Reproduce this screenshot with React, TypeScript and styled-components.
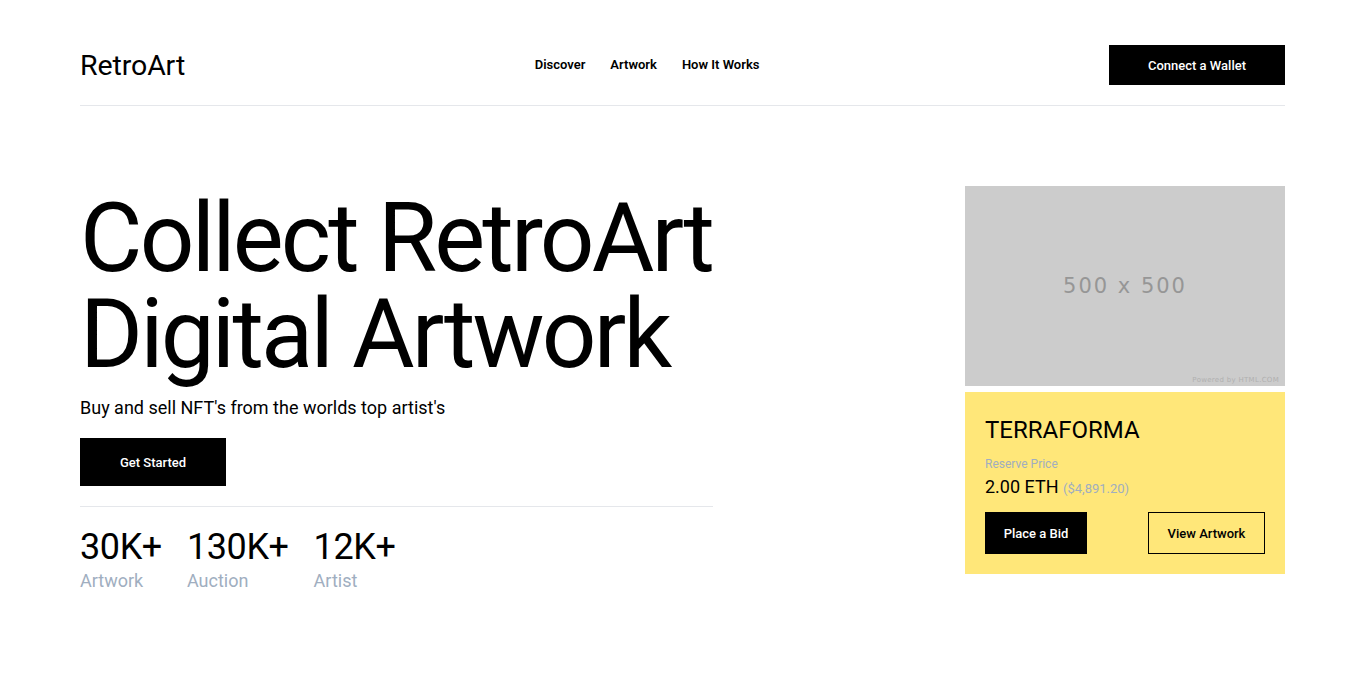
import React from "react";
import styled, { createGlobalStyle } from "styled-components";

const Global = createGlobalStyle`
  * { box-sizing: border-box; }
  body { margin: 0; background: #fff; font-family: Roboto, "Noto Sans", sans-serif; color: #000; }
`;

const Page = styled.div`
  padding: 0 80px;
`;

const Header = styled.header`
  display: flex;
  justify-content: space-between;
  align-items: center;
  padding: 45px 0 20px;
  border-bottom: 1px solid #e5e7eb;
`;

const Logo = styled.div`
  font-size: 28.5px;
  font-weight: 400;
  letter-spacing: -0.1px;
`;

const Nav = styled.nav`
  display: flex;
  gap: 25px;
  margin-top: -1px;
`;

const NavLink = styled.a`
  font-size: 13px;
  font-weight: 600;
  color: #000;
  text-decoration: none;
`;

const Button = styled.button<{ $outline?: boolean }>`
  font-family: inherit;
  font-size: 13px;
  font-weight: 500;
  background: ${(p) => (p.$outline ? "transparent" : "#000")};
  color: ${(p) => (p.$outline ? "#000" : "#fff")};
  border: 1px solid #000;
  padding: 0;
  cursor: pointer;
`;

const WalletButton = styled(Button)`
  width: 176px;
  height: 40px;
`;

const Hero = styled.section`
  display: flex;
  justify-content: space-between;
  align-items: flex-start;
  padding-top: 80px;
`;

const Left = styled.div`
  width: 633px;
  padding-top: 4px;
`;

const Title = styled.h1`
  margin: 0;
  font-size: 96px;
  font-weight: 400;
  line-height: 96px;
  letter-spacing: -2.8px;
  white-space: nowrap;
`;

const Subtitle = styled.p`
  margin: 12px 0 0;
  font-size: 18px;
  line-height: 28px;
`;

const StartButton = styled(Button)`
  width: 146px;
  height: 48px;
  margin-top: 16px;
`;

const Divider = styled.hr`
  margin: 20px 0 0;
  border: 0;
  border-top: 1px solid #e5e7eb;
`;

const Stats = styled.div`
  display: flex;
  gap: 25px;
  margin-top: 20px;
`;

const Stat = styled.div`
  display: flex;
  flex-direction: column;
`;

const StatValue = styled.div`
  font-size: 36px;
  line-height: 40px;
  letter-spacing: -0.4px;
`;

const StatLabel = styled.div`
  font-size: 18px;
  line-height: 28px;
  color: #a0aec0;
`;

const Card = styled.div`
  width: 320px;
  display: flex;
  flex-direction: column;
  gap: 6px;
`;

const Placeholder = styled.div`
  position: relative;
  height: 200px;
  background: #cccccc;
  display: flex;
  align-items: center;
  justify-content: center;
  font-family: "DejaVu Sans", Verdana, sans-serif;
  font-size: 21px;
  letter-spacing: 2px;
  color: #969696;
`;

const Powered = styled.span`
  position: absolute;
  right: 6px;
  bottom: 2px;
  font-size: 7px;
  letter-spacing: 0.3px;
  color: #b0b0b0;
`;

const Info = styled.div`
  background: #ffe779;
  padding: 22px 20px 20px;
`;

const CardTitle = styled.h2`
  margin: 0;
  font-size: 24px;
  font-weight: 400;
  line-height: 32px;
`;

const ReserveLabel = styled.div`
  margin-top: 10px;
  font-size: 12px;
  line-height: 16px;
  color: #a0aec0;
`;

const Price = styled.div`
  margin-top: 1px;
  font-size: 18px;
  line-height: 28px;
`;

const Usd = styled.span`
  font-size: 13px;
  color: #a0aec0;
`;

const Actions = styled.div`
  display: flex;
  justify-content: space-between;
  margin-top: 9px;
`;

const BidButton = styled(Button)`
  width: 102px;
  height: 42px;
`;

const ViewButton = styled(Button)`
  width: 117px;
  height: 42px;
`;

export default function App() {
  return (
    <Page>
      <Global />
      <Header>
        <Logo>RetroArt</Logo>
        <Nav>
          <NavLink href="#">Discover</NavLink>
          <NavLink href="#">Artwork</NavLink>
          <NavLink href="#">How It Works</NavLink>
        </Nav>
        <WalletButton>Connect a Wallet</WalletButton>
      </Header>
      <Hero>
        <Left>
          <Title>
            Collect RetroArt
            <br />
            Digital Artwork
          </Title>
          <Subtitle>Buy and sell NFT's from the worlds top artist's</Subtitle>
          <StartButton>Get Started</StartButton>
          <Divider />
          <Stats>
            <Stat>
              <StatValue>30K+</StatValue>
              <StatLabel>Artwork</StatLabel>
            </Stat>
            <Stat>
              <StatValue>130K+</StatValue>
              <StatLabel>Auction</StatLabel>
            </Stat>
            <Stat>
              <StatValue>12K+</StatValue>
              <StatLabel>Artist</StatLabel>
            </Stat>
          </Stats>
        </Left>
        <Card>
          <Placeholder>
            500 x 500
            <Powered>Powered by HTML.COM</Powered>
          </Placeholder>
          <Info>
            <CardTitle>TERRAFORMA</CardTitle>
            <ReserveLabel>Reserve Price</ReserveLabel>
            <Price>
              2.00 ETH <Usd>($4,891.20)</Usd>
            </Price>
            <Actions>
              <BidButton>Place a Bid</BidButton>
              <ViewButton $outline>View Artwork</ViewButton>
            </Actions>
          </Info>
        </Card>
      </Hero>
    </Page>
  );
}
